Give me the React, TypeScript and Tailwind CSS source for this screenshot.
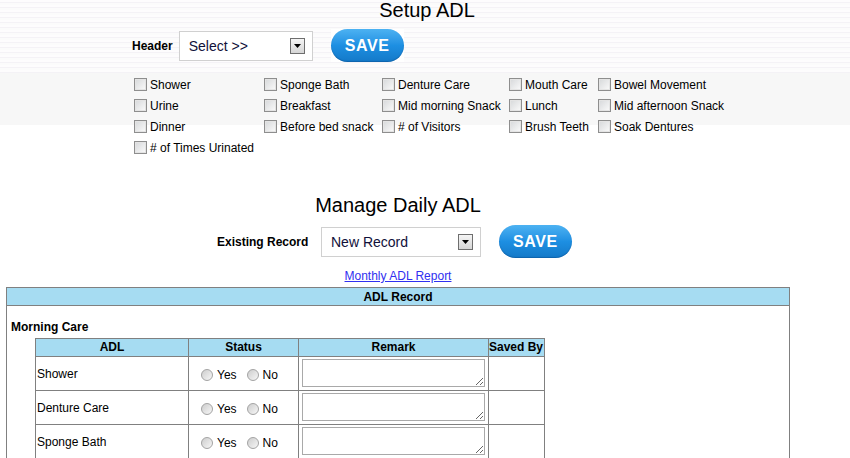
import React from 'react';

const checks: string[][] = [
  ['Shower', 'Sponge Bath', 'Denture Care', 'Mouth Care', 'Bowel Movement'],
  ['Urine', 'Breakfast', 'Mid morning Snack', 'Lunch', 'Mid afternoon Snack'],
  ['Dinner', 'Before bed snack', '# of Visitors', 'Brush Teeth', 'Soak Dentures'],
  ['# of Times Urinated'],
];

const rows = ['Shower', 'Denture Care', 'Sponge Bath'];

const CheckBox: React.FC<{ label: string }> = ({ label }) => (
  <label className="flex items-center h-[21px] whitespace-nowrap">
    <span className="w-[13px] h-[13px] border border-[#8e8e8e] bg-gradient-to-br from-[#d6d8da] to-[#fbfbfb] shadow-[inset_0_0_0_1px_#e4e4e4] shrink-0" />
    <span className="ml-[3px] text-[12px] leading-[14px]">{label}</span>
  </label>
);

const Radio: React.FC<{ label: string }> = ({ label }) => (
  <span className="flex items-center">
    <span className="w-[12px] h-[12px] rounded-full border border-[#a3a3a3] bg-gradient-to-br from-[#cdcdcd] to-[#f7f7f7]" />
    <span className="ml-[4px] text-[12px] leading-[14px]">{label}</span>
  </span>
);

const SelectBox: React.FC<{ text: string; width: string }> = ({ text, width }) => (
  <div className={`${width} h-[30px] bg-white border border-[#d0d0d0] flex items-center justify-between pl-[9px] pr-[7px]`}>
    <span className="text-[14px] leading-[16px] text-[#10103a]">{text}</span>
    <span className="w-[15px] h-[16px] border border-[#6e6e6e] bg-gradient-to-b from-[#f5f5f5] to-[#d6d6d6] flex items-center justify-center">
      <svg width="7" height="4" viewBox="0 0 7 4">
        <polygon points="0,0 7,0 3.5,4" fill="#000" />
      </svg>
    </span>
  </div>
);

const SaveButton: React.FC = () => (
  <div className="w-[73px] h-[33px] bg-white">
    <div className="w-full h-full rounded-full bg-gradient-to-b from-[#4cb2f2] via-[#1d8fe2] to-[#1479c8] shadow-[inset_0_-1px_1px_rgba(0,60,120,0.35)] flex items-center justify-center">
      <span className="text-white font-bold text-[16px] leading-[16px] tracking-[0.6px]">SAVE</span>
    </div>
  </div>
);

export default function App() {
  return (
    <div className="w-[850px] h-[458px] overflow-hidden bg-white text-black font-['Liberation_Sans',Arial,sans-serif]">
      {/* setup block */}
      <div className="bg-[linear-gradient(to_bottom,transparent_0,transparent_73px,#f7f7f7_73px,#f7f7f7_125px,#ffffff_125px),repeating-linear-gradient(to_bottom,#fdfcfd_0,#fdfcfd_2px,#f4f2f6_2px,#f4f2f6_3px,#fbfbfb_3px,#fbfbfb_5px)]">
        <h1 className="h-[29px] text-[20px] leading-[20px] text-center pl-[4px]">Setup ADL</h1>
        <div className="flex items-center h-[33px] pl-[132px]">
          <span className="text-[12px] font-bold">Header</span>
          <div className="ml-[6px]">
            <SelectBox text="Select >>" width="w-[134px]" />
          </div>
          <div className="ml-[18px]">
            <SaveButton />
          </div>
        </div>
        <div className="mt-[12px] pl-[134px] grid grid-cols-[130px_118px_127px_89px_auto]">
          {checks.flatMap((r, i) =>
            r.map((c, j) => <CheckBox key={`${i}-${j}`} label={c} />)
          )}
        </div>
      </div>

      {/* manage block */}
      <div className="w-[796px] mt-[38px]">
        <h2 className="h-[29px] text-[20px] leading-[18px] text-center">Manage Daily ADL</h2>
        <div className="flex items-center h-[33px] pl-[217px]">
          <span className="w-[88px] whitespace-nowrap text-[12px] font-bold">Existing Record</span>
          <div className="ml-[16px]">
            <SelectBox text="New Record" width="w-[160px]" />
          </div>
          <div className="ml-[18px]">
            <SaveButton />
          </div>
        </div>
        <div className="mt-[11px] h-[14px] text-center text-[12px] leading-[14px]">
          <a href="#" className="underline text-[#3030f0]">Monthly ADL Report</a>
        </div>

        <div className="mt-[4px] mx-[6px] border border-[#808080] h-[200px]">
          <div className="h-[18px] bg-[#a6dcf2] border-b border-[#808080] text-center text-[12px] font-bold leading-[18px]">
            ADL Record
          </div>
          <div className="pt-[14px] pl-[4px] text-[12px] font-bold leading-[14px]">Morning Care</div>
          <div className="mt-[4px] ml-[28px] w-[510px] border-l border-t border-[#808080] text-[12px]">
            <div className="flex h-[18px] bg-[#a6dcf2] font-bold leading-[17px] text-center">
              <div className="w-[153px] border-r border-b border-[#808080]">ADL</div>
              <div className="w-[110px] border-r border-b border-[#808080]">Status</div>
              <div className="w-[190px] border-r border-b border-[#808080]">Remark</div>
              <div className="w-[56px] border-r border-b border-[#808080] whitespace-nowrap text-left">Saved By</div>
            </div>
            {rows.map((r) => (
              <div key={r} className="flex h-[34px]">
                <div className="w-[153px] border-r border-b border-[#808080] flex items-center pl-[1px]">{r}</div>
                <div className="w-[110px] border-r border-b border-[#808080] flex items-center pl-[12px] pt-[2px] gap-[10px]">
                  <Radio label="Yes" />
                  <Radio label="No" />
                </div>
                <div className="w-[190px] border-r border-b border-[#808080] pl-[3px] pt-[2px]">
                  <textarea className="block w-[183px] h-[28px] border border-[#a9a9a9] bg-white resize" />
                </div>
                <div className="w-[56px] border-r border-b border-[#808080]" />
              </div>
            ))}
          </div>
        </div>
      </div>
    </div>
  );
}
